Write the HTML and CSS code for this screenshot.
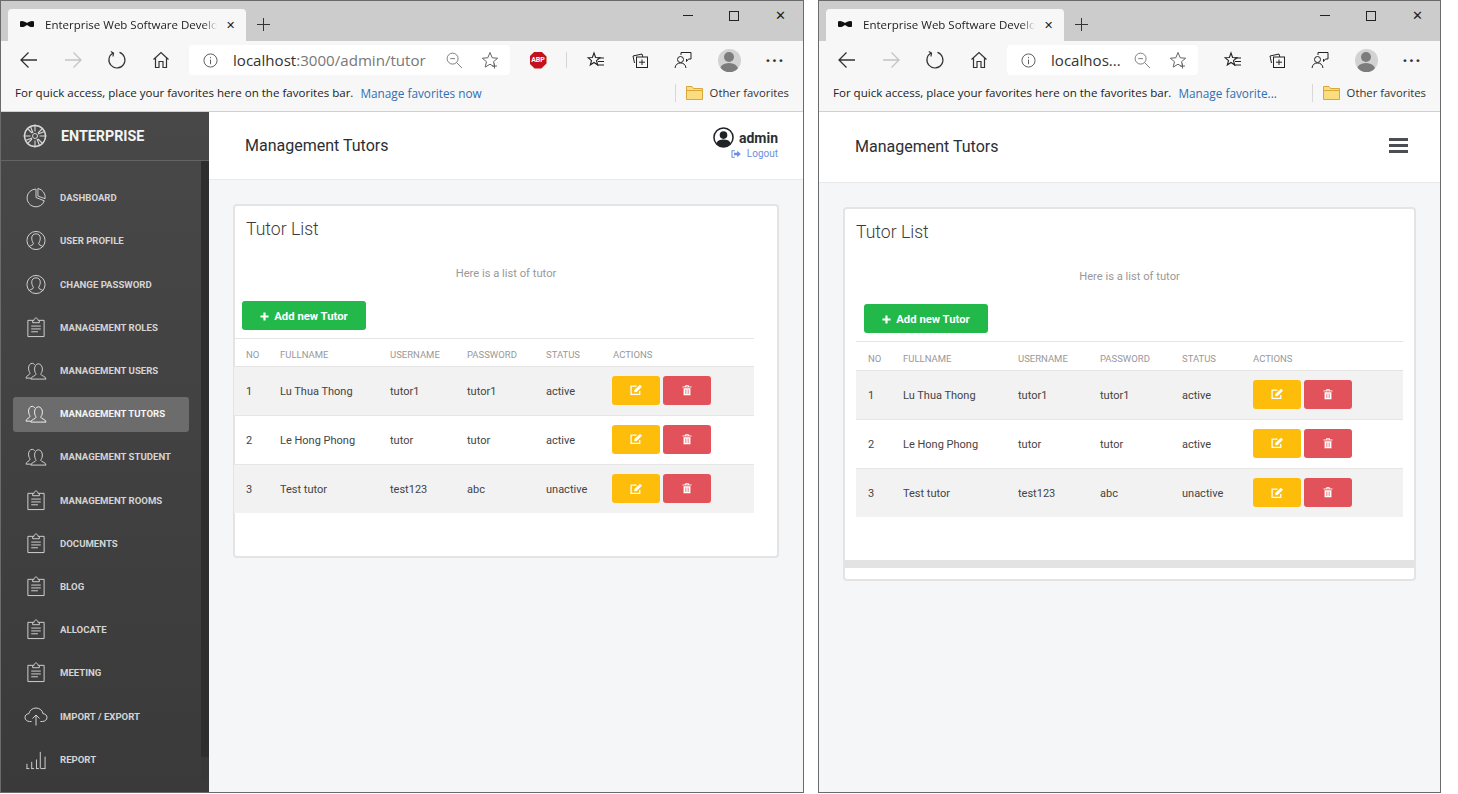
FILE: index.html
```html
<!DOCTYPE html>
<html lang="en">
<head>
  <meta charset="UTF-8">
  <title>Management Tutors</title>
  <link rel="stylesheet" href="styles.css">
</head>
<body>

  <svg class="defs" width="0" height="0">
    <symbol id="i-back" viewBox="0 0 20 20"><path d="M18 10H2M9.5 2.5L2 10l7.5 7.5" fill="none" stroke="currentColor" stroke-width="1.3"/></symbol>
    <symbol id="i-forward" viewBox="0 0 20 20"><path d="M2 10h16M10.5 2.5L18 10l-7.500 7.500" fill="none" stroke="currentColor" stroke-width="1.300"/></symbol>
    <symbol id="i-refresh" viewBox="0 0 20 20"><path d="M12.500 2.400A8 8 0 1 1 6 3M3.800 1.500L6.500 3 6 6.500" fill="none" stroke="currentColor" stroke-width="1.200"/></symbol>
    <symbol id="i-home" viewBox="0 0 20 20"><path d="M2.500 9.500L10 2.500l7.500 7M4.500 8v9.500H8v-6h4v6h3.500V8" fill="none" stroke="currentColor" stroke-width="1.200"/></symbol>
    <symbol id="i-info" viewBox="0 0 16 16"><circle cx="8" cy="8" r="7" fill="none" stroke="currentColor"/><path d="M8 7v5M8 4.200v1.300" stroke="currentColor"/></symbol>
    <symbol id="i-zoom" viewBox="0 0 18 18"><circle cx="7" cy="7" r="5.800" fill="none" stroke="currentColor"/><path d="M11.200 11.200L17 17M4.500 7h5" stroke="currentColor" fill="none"/></symbol>
    <symbol id="i-star" viewBox="0 0 18 18"><path d="M9 1.500l2.200 5.300 5.500.4-4.200 3.500 1.300 5.400L9 13.200l-4.800 2.900 1.300-5.400L1.300 7.200l5.500-.4z" fill="none" stroke="currentColor"/><path d="M13.500 12.500v5M11 15h5" stroke="currentColor"/></symbol>
    <symbol id="i-favs" viewBox="0 0 18 18"><path d="M7 2l1.600 4.500 4.400.2-3.500 2.900 1.200 4.400L7 11.500 3.300 14l1.200-4.400L1 6.700l4.400-.2z" fill="none" stroke="#222" stroke-width="1.100"/><path d="M10.500 7H17M11 10.500h6M10 14h7" stroke="#222" stroke-width="1.100"/></symbol>
    <symbol id="i-coll" viewBox="0 0 18 18"><path d="M3.500 12L2 5l9-2 .8 3" fill="none" stroke="#222"/><rect x="5.500" y="6" width="11" height="10.500" fill="none" stroke="#222"/><path d="M11 8.500v5.500M8 11.200h6" stroke="#222"/></symbol>
    <symbol id="i-feed" viewBox="0 0 18 18"><circle cx="6.500" cy="8.500" r="3" fill="none" stroke="#222"/><path d="M1 17c.5-3.500 2.500-5 5.500-5s5 1.500 5.500 5M7 4V1.500h10V8h-2.500l-2 2.500V8" fill="none" stroke="#222"/></symbol>
    <symbol id="i-pie" viewBox="0 0 22 22"><path d="M11 2.200A9.300 9.300 0 1 0 19.700 14.500L11 11z" fill="none" stroke="currentColor" stroke-width="1"/><path d="M13 1.500A9.500 9.500 0 0 1 20.500 12.300L13 9.500z" fill="none" stroke="currentColor" stroke-width="1"/></symbol>
    <symbol id="i-user" viewBox="0 0 22 22"><circle cx="11" cy="11" r="9.500" fill="none" stroke="currentColor" stroke-width="1"/><path d="M8.300 14.500c0-1-1.800-2.500-1.800-6C6.500 5.500 8.500 4 11 4s4.500 1.500 4.500 4.500c0 3.500-1.800 5-1.800 6 0 1 2.500 1.500 4.800 3M8.300 14.500c0 1-2.500 1.500-4.800 3" fill="none" stroke="currentColor" stroke-width="1"/></symbol>
    <symbol id="i-clip" viewBox="0 0 22 22"><path d="M7.500 3.500H2.500v17h17v-17h-5M7.500 6V3.500H9C9 2 10 1 11 1s2 1 2 2.500h1.500V6z" fill="none" stroke="currentColor" stroke-width="1"/><path d="M6 9.500h10M6 12.500h10M6 15.500h7" stroke="currentColor" stroke-width="1"/></symbol>
    <symbol id="i-users" viewBox="0 0 22 22"><path d="M11 15c0-1-1.500-2-1.500-5.500 0-3 1.700-5.500 4-5.500s4.200 2.500 4.200 5.500c0 3.500-1.700 4.500-1.700 5.500 0 1.500 5.500 2 5.500 5H5.500C5.500 17.500 11 16.500 11 15z" fill="none" stroke="currentColor" stroke-width="1"/><path d="M9.700 5.200C9 4 8 3.500 7 3.500c-2.300 0-3.800 2.200-3.800 5 0 3.300 1.500 4.500 1.500 5.500 0 1.500-4.200 2.500-4.200 5H5.500" fill="none" stroke="currentColor" stroke-width="1"/></symbol>
    <symbol id="i-cloud" viewBox="0 0 24 20"><path d="M7.500 15H5.500C3 15 1 13.200 1 11s1.700-3.800 3.800-3.800C5.500 4 8.300 1.500 12 1.500c3.800 0 6.500 2.500 7 5.700 2.200 0 4 1.700 4 3.800S21 15 18.500 15h-2" fill="none" stroke="currentColor" stroke-width="1"/><path d="M12 19V9M8.500 12L12 8.500l3.500 3.500" fill="none" stroke="currentColor" stroke-width="1"/></symbol>
    <symbol id="i-chart" viewBox="0 0 22 22"><path d="M1 20.500h3M6 20.500h3M11 20.500h3M16 20.500h5M1.500 20.500v-5M6.500 20.500v-7M11.500 20.500v-9.500M15.500 20.500V3M20.500 20.500V8" fill="none" stroke="currentColor" stroke-width="1"/></symbol>
    <symbol id="i-avatar" viewBox="0 0 22 22"><circle cx="11" cy="11" r="10" fill="#fff" stroke="#1f2227" stroke-width="1.600"/><circle cx="11" cy="8.500" r="4" fill="#1f2227"/><path d="M3.500 17c1-3 4-4 7.500-4s6.500 1 7.500 4c-2 2.500-4.500 4-7.500 4s-5.500-1.500-7.500-4z" fill="#1f2227"/></symbol>
    <symbol id="i-logout" viewBox="0 0 12 10"><path d="M4.500 1H1v8h3.500" fill="none" stroke="currentColor" stroke-width="1.300"/><path d="M3.500 3.500h4V1L12 5 7.500 9V6.500h-4z" fill="currentColor"/></symbol>
    <symbol id="i-plus" viewBox="0 0 10 10"><path d="M5 .5v9M.5 5h9" stroke="currentColor" stroke-width="2.400"/></symbol>
    <symbol id="i-edit" viewBox="0 0 12 11"><path d="M9 6.500V9.500H1V2h5" fill="none" stroke="currentColor" stroke-width="1.200"/><path d="M4 5.500L9.200.6l1.900 1.800L6.100 7.400 4 7.600z" fill="currentColor"/></symbol>
    <symbol id="i-trash" viewBox="0 0 10 11"><path d="M.5 2h9M3.500 2V.7h3V2" fill="none" stroke="currentColor"/><path d="M1.300 3h7.400v7.500H1.300zM3.500 4.500v4.500M5 4.500v4.500M6.500 4.500v4.500" fill="currentColor" stroke="#e2525a" stroke-width=".5"/></symbol>
    <symbol id="i-bow" viewBox="0 0 14 8"><path d="M0 1.500C2 0 5 1.500 7 3c2-1.500 5-3 7-1.500v5C12 8 9 6.500 7 5 5 6.500 2 8 0 6.500z" fill="#111"/></symbol>
    <symbol id="i-folder" viewBox="0 0 17 14"><path d="M.5 13.500V.5h5.500l1.500 2h9v11z" fill="#fbdc7e" stroke="#d8a93a"/><path d="M.5 4.500h16" stroke="#d8a93a"/></symbol>
    <symbol id="i-logo" viewBox="0 0 24 24"><circle cx="12" cy="12" r="10.500" fill="none" stroke="currentColor" stroke-width="1.400"/><circle cx="12" cy="12" r="2.500" fill="none" stroke="currentColor"/><path d="M12 .5v7M12 16.500v7M.5 12h7M16.500 12h7M4 4l5 5M15 15l5 5M20 4l-5 5M9 15l-5 5M7.500 2.500l2.500 6.500M16.500 21.500L14 15M21.500 7.500L15 10M2.500 16.500L9 14" stroke="currentColor" stroke-width="1.100"/></symbol>
  </svg>

  <!-- big window -->
  <div class="window window-wide">
    <div class="tabstrip">
      <div class="tab">
        <svg class="favicon"><use href="#i-bow"/></svg>
        <span class="tab-title">Enterprise Web Software Develop</span>
        <span class="tab-close">✕</span>
      </div>
      <span class="new-tab"></span>
      <div class="win-controls">
        <span class="ctl"><i class="ctl-min"></i></span>
        <span class="ctl"><i class="ctl-max"></i></span>
        <span class="ctl ctl-close">✕</span>
      </div>
    </div>
    <div class="toolbar">
      <span class="tool"><svg class="ic20"><use href="#i-back"/></svg></span>
      <span class="tool tool-off"><svg class="ic20"><use href="#i-forward"/></svg></span>
      <span class="tool"><svg class="ic20"><use href="#i-refresh"/></svg></span>
      <span class="tool"><svg class="ic20"><use href="#i-home"/></svg></span>
      <div class="address">
        <svg class="ic-info"><use href="#i-info"/></svg>
        <span class="url">localhost<em>:3000/admin/tutor</em></span>
        <svg class="ic-zoom"><use href="#i-zoom"/></svg>
        <svg class="ic-star"><use href="#i-star"/></svg>
      </div>
      <span class="tool"><span class="abp">ABP</span></span>
      <span class="tool-sep"></span>
      <span class="tool"><svg class="ic18"><use href="#i-favs"/></svg></span>
      <span class="tool"><svg class="ic18"><use href="#i-coll"/></svg></span>
      <span class="tool tool-feed"><svg class="ic18"><use href="#i-feed"/></svg></span>
      <span class="tool"><span class="profile"><i class="profile-head"></i><i class="profile-body"></i></span></span>
      <span class="tool tool-dots">···</span>
    </div>
    <div class="favbar">
      <span class="fav-text">For quick access, place your favorites here on the favorites bar.</span>
      <a class="fav-link">Manage favorites now</a>
      <span class="fav-sep"></span>
      <svg class="ic-folder"><use href="#i-folder"/></svg>
      <span class="fav-other">Other favorites</span>
    </div>

    <div class="app">
      <aside class="sidebar">
        <div class="brand">
          <svg class="brand-logo"><use href="#i-logo"/></svg>
          <span>ENTERPRISE</span>
        </div>
        <div class="side-body">
          <ul class="side-list">
            <li class="side-item"><svg class="side-ic"><use href="#i-pie"/></svg>Dashboard</li>
            <li class="side-item"><svg class="side-ic"><use href="#i-user"/></svg>User Profile</li>
            <li class="side-item"><svg class="side-ic"><use href="#i-user"/></svg>Change Password</li>
            <li class="side-item"><svg class="side-ic"><use href="#i-clip"/></svg>Management Roles</li>
            <li class="side-item"><svg class="side-ic"><use href="#i-users"/></svg>Management Users</li>
            <li class="side-item active"><svg class="side-ic"><use href="#i-users"/></svg>Management Tutors</li>
            <li class="side-item"><svg class="side-ic"><use href="#i-users"/></svg>Management Student</li>
            <li class="side-item"><svg class="side-ic"><use href="#i-clip"/></svg>Management Rooms</li>
            <li class="side-item"><svg class="side-ic"><use href="#i-clip"/></svg>Documents</li>
            <li class="side-item"><svg class="side-ic"><use href="#i-clip"/></svg>Blog</li>
            <li class="side-item"><svg class="side-ic"><use href="#i-clip"/></svg>Allocate</li>
            <li class="side-item"><svg class="side-ic"><use href="#i-clip"/></svg>Meeting</li>
            <li class="side-item"><svg class="side-ic"><use href="#i-cloud"/></svg>Import / Export</li>
            <li class="side-item"><svg class="side-ic"><use href="#i-chart"/></svg>Report</li>
          </ul>
          <div class="side-thumb"></div>
        </div>
      </aside>

      <main class="main">
        <header class="topbar">
          <h2 class="page-title">Management Tutors</h2>
          <div class="account">
            <div class="account-name"><svg class="ic-avatar"><use href="#i-avatar"/></svg>admin</div>
            <a class="logout"><svg class="ic-logout"><use href="#i-logout"/></svg>Logout</a>
          </div>
        </header>
        <section class="card">
          <h3 class="card-title">Tutor List</h3>
          <p class="card-sub">Here is a list of tutor</p>
          <div class="table-wrap">
            <button class="btn-add"><svg class="ic-plus"><use href="#i-plus"/></svg>Add new Tutor</button>
            <table class="tutors">
              <colgroup><col class="c-no"><col class="c-name"><col class="c-user"><col class="c-pass"><col class="c-status"><col></colgroup>
              <thead><tr><th>No</th><th>Fullname</th><th>Username</th><th>Password</th><th>Status</th><th>Actions</th></tr></thead>
              <tbody>
                <tr class="odd"><td>1</td><td>Lu Thua Thong</td><td>tutor1</td><td>tutor1</td><td>active</td><td class="acts"><button class="btn-edit"><svg class="ic-edit"><use href="#i-edit"/></svg></button><button class="btn-del"><svg class="ic-trash"><use href="#i-trash"/></svg></button></td></tr>
                <tr><td>2</td><td>Le Hong Phong</td><td>tutor</td><td>tutor</td><td>active</td><td class="acts"><button class="btn-edit"><svg class="ic-edit"><use href="#i-edit"/></svg></button><button class="btn-del"><svg class="ic-trash"><use href="#i-trash"/></svg></button></td></tr>
                <tr class="odd"><td>3</td><td>Test tutor</td><td>test123</td><td>abc</td><td>unactive</td><td class="acts"><button class="btn-edit"><svg class="ic-edit"><use href="#i-edit"/></svg></button><button class="btn-del"><svg class="ic-trash"><use href="#i-trash"/></svg></button></td></tr>
              </tbody>
            </table>
          </div>
        </section>
      </main>
    </div>
  </div>

  <!-- narrow window -->
  <div class="window window-narrow">
    <div class="tabstrip">
      <div class="tab">
        <svg class="favicon"><use href="#i-bow"/></svg>
        <span class="tab-title">Enterprise Web Software Develop</span>
        <span class="tab-close">✕</span>
      </div>
      <span class="new-tab"></span>
      <div class="win-controls">
        <span class="ctl"><i class="ctl-min"></i></span>
        <span class="ctl"><i class="ctl-max"></i></span>
        <span class="ctl ctl-close">✕</span>
      </div>
    </div>
    <div class="toolbar">
      <span class="tool"><svg class="ic20"><use href="#i-back"/></svg></span>
      <span class="tool tool-off"><svg class="ic20"><use href="#i-forward"/></svg></span>
      <span class="tool"><svg class="ic20"><use href="#i-refresh"/></svg></span>
      <span class="tool"><svg class="ic20"><use href="#i-home"/></svg></span>
      <div class="address">
        <svg class="ic-info"><use href="#i-info"/></svg>
        <span class="url">localhos...</span>
        <svg class="ic-zoom"><use href="#i-zoom"/></svg>
        <svg class="ic-star"><use href="#i-star"/></svg>
      </div>
      <span class="tool tool-first"><svg class="ic18"><use href="#i-favs"/></svg></span>
      <span class="tool"><svg class="ic18"><use href="#i-coll"/></svg></span>
      <span class="tool tool-feed"><svg class="ic18"><use href="#i-feed"/></svg></span>
      <span class="tool"><span class="profile"><i class="profile-head"></i><i class="profile-body"></i></span></span>
      <span class="tool tool-dots">···</span>
    </div>
    <div class="favbar">
      <span class="fav-text">For quick access, place your favorites here on the favorites bar.</span>
      <a class="fav-link">Manage favorite...</a>
      <span class="fav-sep"></span>
      <svg class="ic-folder"><use href="#i-folder"/></svg>
      <span class="fav-other">Other favorites</span>
    </div>

    <div class="app">
      <main class="main">
        <header class="topbar">
          <h2 class="page-title">Management Tutors</h2>
          <div class="burger"><i></i><i></i><i></i></div>
        </header>
        <section class="card">
          <h3 class="card-title">Tutor List</h3>
          <p class="card-sub">Here is a list of tutor</p>
          <div class="table-wrap">
            <button class="btn-add"><svg class="ic-plus"><use href="#i-plus"/></svg>Add new Tutor</button>
            <table class="tutors">
              <colgroup><col class="c-no"><col class="c-name"><col class="c-user"><col class="c-pass"><col class="c-status"><col></colgroup>
              <thead><tr><th>No</th><th>Fullname</th><th>Username</th><th>Password</th><th>Status</th><th>Actions</th></tr></thead>
              <tbody>
                <tr class="odd"><td>1</td><td>Lu Thua Thong</td><td>tutor1</td><td>tutor1</td><td>active</td><td class="acts"><button class="btn-edit"><svg class="ic-edit"><use href="#i-edit"/></svg></button><button class="btn-del"><svg class="ic-trash"><use href="#i-trash"/></svg></button></td></tr>
                <tr><td>2</td><td>Le Hong Phong</td><td>tutor</td><td>tutor</td><td>active</td><td class="acts"><button class="btn-edit"><svg class="ic-edit"><use href="#i-edit"/></svg></button><button class="btn-del"><svg class="ic-trash"><use href="#i-trash"/></svg></button></td></tr>
                <tr class="odd"><td>3</td><td>Test tutor</td><td>test123</td><td>abc</td><td>unactive</td><td class="acts"><button class="btn-edit"><svg class="ic-edit"><use href="#i-edit"/></svg></button><button class="btn-del"><svg class="ic-trash"><use href="#i-trash"/></svg></button></td></tr>
              </tbody>
            </table>
          </div>
          <div class="hscroll"></div>
        </section>
      </main>
    </div>
  </div>

</body>
</html>
```

FILE: styles.css
```css
* {
  box-sizing: border-box;
}

body {
  margin: 0;
  background: #fff;
  display: flex;
  gap: 14px;
  font-family: "Roboto", sans-serif;
  overflow: hidden;
}

.defs {
  position: absolute;
}

.window {
  height: 793px;
  border: 1px solid #6b6b6b;
  display: flex;
  flex-direction: column;
  overflow: hidden;
}

.window-wide {
  width: 804px;
}

.window-narrow {
  width: 623px;
}

/* browser chrome */
.tabstrip {
  height: 40px;
  background: #cccccc;
  display: flex;
  align-items: flex-end;
}

.tab {
  width: 238px;
  height: 32px;
  margin-left: 7px;
  padding-bottom: 2px;
  background: #f7f7f7;
  border-radius: 4px 4px 0 0;
  display: flex;
  align-items: center;
  font-family: "Open Sans", sans-serif;
  font-size: 11.500px;
  color: #222;
}

.favicon {
  width: 14px;
  height: 8px;
  margin-left: 12px;
  flex: none;
}

.tab-title {
  width: 172px;
  margin-left: 11px;
  white-space: nowrap;
  overflow: hidden;
  -webkit-mask-image: linear-gradient(to right, #000 92%, transparent);
  mask-image: linear-gradient(to right, #000 92%, transparent);
}

.tab-close {
  margin-left: 9px;
  font-size: 11px;
}

.new-tab {
  width: 13px;
  height: 13px;
  margin: 0 0 10px 11px;
  background:
    linear-gradient(#333, #333) center / 100% 1px no-repeat,
    linear-gradient(#333, #333) center / 1px 100% no-repeat;
}

.win-controls {
  margin-left: auto;
  align-self: flex-start;
  display: flex;
}

.ctl {
  width: 46px;
  height: 29px;
  display: flex;
  align-items: center;
  justify-content: center;
  color: #222;
  font-size: 13px;
}

.ctl-min {
  width: 10px;
  height: 1px;
  background: #222;
}

.ctl-max {
  width: 10px;
  height: 10px;
  border: 1px solid #222;
}

.toolbar {
  height: 40px;
  background: #f7f7f7;
  padding: 0 6px 2px;
  display: flex;
  align-items: center;
}

.tool {
  width: 44px;
  height: 30px;
  flex: none;
  display: flex;
  align-items: center;
  justify-content: center;
  color: #333;
}

.tool-off {
  color: #c4c4c4;
}

.tool-first {
  margin-left: 7px;
}

.tool-feed {
  margin-right: 1px;
  padding-right: 2px;
}

.tool-sep {
  width: 1px;
  height: 16px;
  margin: 0 7px 0 6px;
  background: #d4d4d4;
}

.tool-dots {
  margin-left: 2px;
  font-size: 18px;
  font-weight: 700;
  letter-spacing: 1px;
  color: #333;
}

.ic20 {
  width: 20px;
  height: 20px;
}

.ic18 {
  width: 18px;
  height: 18px;
}

.address {
  flex: 1;
  height: 30px;
  margin: 0 6px;
  padding: 0 11px 0 14px;
  background: #fff;
  border-radius: 4px;
  display: flex;
  align-items: center;
}

.ic-info {
  width: 15px;
  height: 15px;
  color: #555;
  flex: none;
}

.url {
  margin-left: 15px;
  font-family: "Open Sans", sans-serif;
  font-size: 15.100px;
  color: #333;
  white-space: nowrap;
}

.url em {
  font-style: normal;
  color: #777;
}

.ic-zoom {
  width: 17px;
  height: 17px;
  margin-left: auto;
  color: #777;
  flex: none;
}

.ic-star {
  width: 18px;
  height: 18px;
  margin-left: 18px;
  color: #666;
  flex: none;
}

.abp {
  width: 17px;
  height: 17px;
  background: #c4111b;
  clip-path: polygon(30% 0, 70% 0, 100% 30%, 100% 70%, 70% 100%, 30% 100%, 0 70%, 0 30%);
  color: #fff;
  font-size: 7px;
  font-weight: 700;
  display: flex;
  align-items: center;
  justify-content: center;
}

.profile {
  width: 23px;
  height: 23px;
  border-radius: 50%;
  background: #d2d2d2;
  overflow: hidden;
  display: flex;
  flex-direction: column;
  align-items: center;
}

.profile-head {
  width: 10px;
  height: 10px;
  margin-top: 3px;
  border-radius: 50%;
  background: #7c7c7c;
  flex: none;
}

.profile-body {
  width: 18px;
  height: 12px;
  margin-top: 1px;
  border-radius: 50%;
  background: #7c7c7c;
  flex: none;
}

.favbar {
  height: 31px;
  background: #f7f7f7;
  border-bottom: 1px solid #d0d0d0;
  padding: 0 14px 7px;
  display: flex;
  align-items: center;
  font-family: "Open Sans", sans-serif;
  font-size: 11.550px;
  color: #222;
  white-space: nowrap;
}

.fav-link {
  margin-left: 7px;
  color: #2f6fb5;
  font-size: 11.800px;
}

.fav-sep {
  width: 1px;
  height: 18px;
  margin-left: auto;
  background: #d8d8d8;
}

.ic-folder {
  width: 17px;
  height: 14px;
  margin-left: 10px;
}

.fav-other {
  margin-left: 7px;
  color: #333;
  font-size: 11.300px;
}

/* app */
.app {
  flex: 1;
  display: flex;
  min-height: 0;
}

.sidebar {
  width: 208px;
  flex: none;
  background: linear-gradient(#484848, #3a3a3a);
  display: flex;
  flex-direction: column;
}

.brand {
  height: 49px;
  border-bottom: 1px solid #646464;
  padding-left: 22px;
  display: flex;
  align-items: center;
  color: #f4f4f4;
  font-size: 14.300px;
  font-weight: 700;
}

.brand-logo {
  width: 24px;
  height: 24px;
  margin-right: 14px;
  color: #d8d8d8;
}

.side-body {
  flex: 1;
  display: flex;
  min-height: 0;
}

.side-list {
  flex: 1;
  margin: 0;
  padding: 19.600px 0 0 12px;
  list-style: none;
}

.side-item {
  width: 176px;
  height: 35px;
  margin-bottom: 8.210px;
  padding: 0 0 1px 11px;
  border-radius: 3px;
  display: flex;
  align-items: center;
  gap: 12px;
  color: #d4d4d4;
  font-size: 9.600px;
  font-weight: 700;
  text-transform: uppercase;
  white-space: nowrap;
}

.side-item.active {
  background: #6c6c6c;
  color: #f5f5f5;
}

.side-ic {
  width: 24px;
  height: 21px;
  flex: none;
}

.side-thumb {
  width: 8px;
  height: 620px;
  flex: none;
  background: linear-gradient(#2e2e2e 596px, #383838 596px);
  border-radius: 0 0 2px 2px;
}

.main {
  flex: 1;
  min-width: 0;
  background: #f5f6f8;
}

.topbar {
  background: #fff;
  border-bottom: 1px solid #e9e9e9;
  padding: 0 25px 0 36px;
  display: flex;
  align-items: center;
  justify-content: space-between;
}

.window-wide .topbar {
  height: 68px;
}

.window-narrow .topbar {
  height: 71px;
  padding-right: 32px;
}

.page-title {
  margin: 0;
  font-size: 16px;
  font-weight: 400;
  color: #2a2f36;
}

.window-narrow .page-title {
  margin-top: -2px;
}

.account {
  text-align: right;
  margin-top: -5px;
}

.account-name {
  display: flex;
  align-items: center;
  justify-content: flex-end;
  font-size: 14px;
  font-weight: 700;
  color: #2a2f36;
}

.ic-avatar {
  width: 21px;
  height: 21px;
  margin-right: 5px;
}

.logout {
  display: flex;
  align-items: center;
  justify-content: flex-end;
  color: #6d8fdd;
  font-size: 10px;
}

.ic-logout {
  width: 10px;
  height: 8px;
  margin-right: 6px;
}

.burger {
  width: 19px;
}

.burger i {
  display: block;
  height: 3px;
  margin-bottom: 3px;
  background: #4a4f55;
}

.card {
  margin: 24px 24px 0;
  background: #fff;
  border: 2px solid #e4e4e4;
  border-radius: 4px;
}

.window-wide .card {
  height: 354px;
}

.window-narrow .card {
  height: 374px;
}

.card-title {
  margin: 0;
  padding: 12px 0 0 11px;
  font-size: 17.600px;
  font-weight: 300;
  line-height: 22px;
  color: #3c3c3c;
}

.card-sub {
  margin: 27px 0 0;
  text-align: center;
  font-size: 11.200px;
  line-height: 14px;
  color: #999;
}

.table-wrap {
  margin-top: 20px;
}

.window-narrow .table-wrap {
  padding: 0 11px;
}

.window-wide .table-wrap {
  padding-right: 23px;
  margin-left: -1px;
}

.btn-add {
  height: 29px;
  width: 124px;
  margin: 0 0 8px 8px;
  padding: 2px 0 0;
  border: 0;
  border-radius: 3px;
  background: #22b84a;
  color: #fff;
  font-family: "Roboto", sans-serif;
  font-size: 11.300px;
  font-weight: 700;
  display: flex;
  align-items: center;
  justify-content: center;
}

.ic-plus {
  width: 9px;
  height: 9px;
  margin-right: 5px;
}

.tutors {
  width: 100%;
  table-layout: fixed;
  border-collapse: collapse;
  font-size: 11px;
}

.window-wide .c-no { width: 34px; }
.window-wide .c-name { width: 110px; }
.window-wide .c-user { width: 77px; }
.window-wide .c-pass { width: 79px; }
.window-wide .c-status { width: 67px; }

.window-narrow .c-no { width: 35px; }
.window-narrow .c-name { width: 115px; }
.window-narrow .c-user { width: 82px; }
.window-narrow .c-pass { width: 82px; }
.window-narrow .c-status { width: 71px; }

.tutors th {
  height: 28px;
  padding: 4px 0 0 12px;
  border-top: 1px solid #e4e4e4;
  border-bottom: 1px solid #e4e4e4;
  text-align: left;
  font-size: 9.500px;
  font-weight: 400;
  text-transform: uppercase;
  color: #999;
}

.window-narrow .tutors th {
  height: 29px;
}

.tutors td {
  height: 49px;
  padding: 0 0 0 12px;
  border-bottom: 1px solid #e6e6e6;
  color: #444;
}

.tutors tr:last-child td {
  height: 48px;
  padding-top: 2px;
  border-bottom: 0;
}

.odd td {
  background: #f2f2f2;
}

.tutors .acts {
  padding: 0 0 2px 11px;
  white-space: nowrap;
}

.tutors tr:last-child .acts {
  padding-top: 0;
  padding-bottom: 0;
}

.window-narrow .tutors .acts {
  padding-left: 12px;
}

.btn-edit,
.btn-del {
  width: 48px;
  height: 29px;
  border: 0;
  border-radius: 3px;
  color: #fff;
  vertical-align: middle;
  padding: 0;
}

.btn-edit {
  background: #fdbd0a;
  margin-right: 3px;
}

.btn-del {
  background: #e2525a;
}

.ic-edit {
  display: block;
  width: 13px;
  height: 12px;
  margin: auto;
}

.ic-trash {
  display: block;
  width: 10px;
  height: 11px;
  margin: auto;
}

.hscroll {
  height: 8px;
  margin-top: 43px;
  background: #e3e3e3;
}
```
